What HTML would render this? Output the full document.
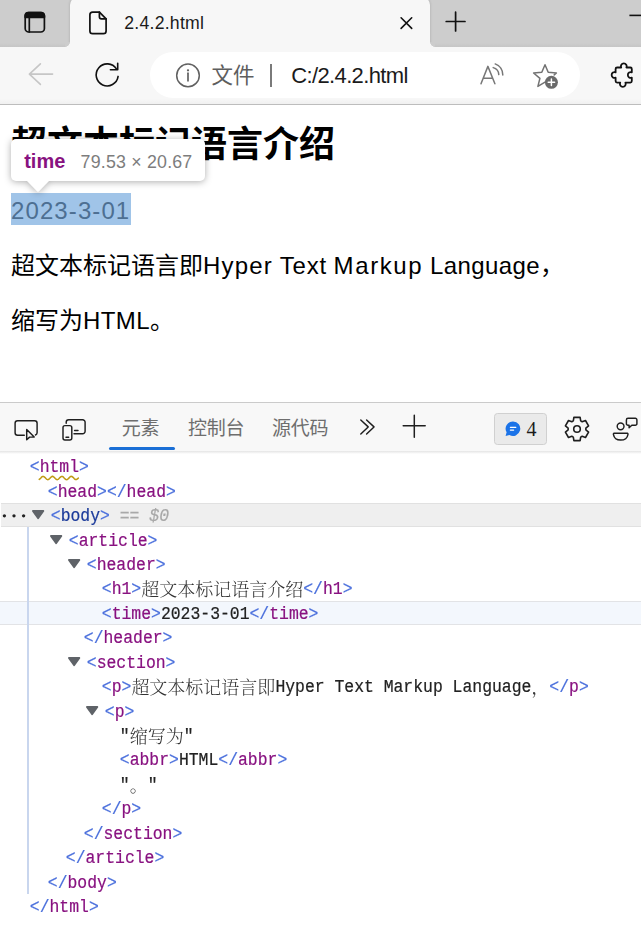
<!DOCTYPE html>
<html lang="zh-CN">
<head>
<meta charset="utf-8">
<title>2.4.2.html</title>
<style>
*{box-sizing:border-box;margin:0;padding:0}
html,body{width:641px;height:933px;overflow:hidden;background:#fff}
body{position:relative;font-family:"Liberation Sans","Noto Sans CJK SC",sans-serif;color:#000}
.abs{position:absolute}
svg{position:absolute;overflow:visible}
/* ---------- browser chrome ---------- */
#tabbar{left:0;top:0;width:641px;height:46.700px;background:linear-gradient(#cdcdcd 43px,#c6c6c6 46.700px)}
#tableft{left:64.700px;top:41.700px;width:5px;height:5px;background:radial-gradient(circle at 0 0,#cdcdcd 4.600px,#f7f7f7 5.100px)}
#tabright{left:430.200px;top:41.700px;width:5px;height:5px;background:radial-gradient(circle at 100% 0,#cdcdcd 4.600px,#f7f7f7 5.100px)}
#tab{left:69.700px;top:-3px;width:360.500px;height:50px;background:#f7f7f7;border-radius:8px 8px 0 0;box-shadow:0 0 3px rgba(0,0,0,.18)}
#toolbar{left:0;top:46.700px;width:641px;height:57.300px;background:linear-gradient(#f7f7f7 52px,#f0f0f0 57px)}
#tbline{left:0;top:103.500px;width:641px;height:1.200px;background:#bdbdbd}
#pill{left:150px;top:52px;width:430px;height:46px;border-radius:23px;background:#fff}
.tabtitle{left:124.300px;top:11.200px;font-size:17.700px;letter-spacing:.22px;line-height:24px;color:#1b1b1b;white-space:nowrap}
.urltxt{font-size:21px;line-height:28px;white-space:nowrap}
/* ---------- page ---------- */
#page{left:0;top:104.700px;width:641px;height:298px;background:#fff}
h1{position:absolute;left:11px;top:120.6px;font-size:36px;line-height:48px;font-weight:bold;white-space:nowrap}
.para{position:absolute;left:11px;font-size:24px;line-height:32px;white-space:nowrap}
#hl{left:11px;top:193px;width:120px;height:31.500px;background:#a0c4e8}
#timetxt{left:11px;top:194.800px;font-size:24px;line-height:32px;color:#4d6f92;white-space:nowrap;letter-spacing:1.1px}
#tip{left:11px;top:138.500px;width:194px;height:42.500px;background:#fff;border-radius:5px}
/* ---------- devtools ---------- */
#dtbar{left:0;top:402px;width:641px;height:49px;background:#f8f8f8;border-top:1px solid #cbcbcb}
#dtshadow{left:0;top:451px;width:641px;height:3px;background:linear-gradient(#e4e4e4,#fff)}
.dttab{font-size:19px;line-height:24px;color:#6e6e6e;white-space:nowrap;top:416.700px;letter-spacing:-.3px}
#tree{left:0;top:454px;width:641px;height:479px;background:#fff}
#selrow{left:1px;top:503px;width:640px;height:24px;background:#efefef;border-top:1px solid #e1e1e1;border-bottom:1px solid #e1e1e1}
#hovrow{left:0;top:601px;width:641px;height:24px;background:#f3f7fd;border-top:1px solid #e2e3e6;border-bottom:1px solid #e2e3e6}
#guide{left:27.300px;top:526.500px;width:1.600px;height:367px;background:#c9d6ee}
.ln{position:absolute;left:0;width:641px;height:24.44px;line-height:24.44px;font-family:"Liberation Mono","Noto Serif CJK SC",monospace;font-size:16.42px;white-space:pre;color:#222;transform:scaleY(1.12);transform-origin:0 0;margin-top:0.2px;-webkit-text-stroke:.2px}
.ln .c{display:inline-block;line-height:0;font-size:18px;font-family:"Liberation Mono","Noto Serif CJK SC",serif;color:#333;transform:scaleY(.893);position:relative;top:1.900px;font-weight:300;-webkit-text-stroke:0}
.t{color:#881280}
.t2{color:#1b3a9a}
.b{color:#4a6fdc}
.eq{color:#a8a8a8;font-style:italic}
.tri{fill:#5f6368;stroke:#5f6368;stroke-width:1.800px;stroke-linejoin:round}
</style>
</head>
<body>
<!-- tab strip -->
<div class="abs" id="tabbar"></div>
<div class="abs" id="tab"></div>
<div class="abs" id="tableft"></div>
<div class="abs" id="tabright"></div>
<div class="abs tabtitle">2.4.2.html</div>
<svg style="left:0;top:0" width="641" height="47" viewBox="0 0 641 47" fill="none" stroke="#111" stroke-width="1.7" stroke-linecap="round" stroke-linejoin="round">
<!-- tab actions -->
<rect x="25.2" y="12.5" width="19.2" height="19.5" rx="3.6"/>
<path d="M25.2 17.3V15.6a3.1 3.1 0 0 1 3.1-3.1h13a3.1 3.1 0 0 1 3.1 3.1v1.7z" fill="#111"/>
<path d="M29.3 17.3V32"/>
<!-- document -->
<path d="M99.4 12.1H92.6a2.7 2.7 0 0 0-2.7 2.7v16.2a2.7 2.7 0 0 0 2.7 2.7h10.8a2.7 2.7 0 0 0 2.7-2.7V18.8z"/>
<path d="M99.4 12.1v4.6a2.1 2.1 0 0 0 2.1 2.1h4.6"/>
<!-- close -->
<path d="M401.100 17.800l10.600 10.600M411.700 17.800l-10.600 10.600" stroke-width="1.600"/>
<!-- new tab -->
<path d="M446.200 21.500h18.800M455.600 12.200v18.800" stroke-width="1.700"/>
<!-- minimize -->
<path d="M629.4 15.4H642" stroke-width="1.6" stroke-linecap="butt"/>
</svg>
<!-- toolbar -->
<div class="abs" id="toolbar"></div>
<div class="abs" id="pill"></div>
<div class="abs urltxt" style="left:211.600px;top:61.800px;color:#5e5e5e;font-size:21.500px">文件</div>
<div class="abs" style="left:270px;top:64px;width:2px;height:23px;background:#7a7a7a"></div>
<div class="abs urltxt" style="left:291.300px;top:61.600px;color:#1b1b1b;font-size:22px;letter-spacing:-0.640px">C:/2.4.2.html</div>
<div class="abs" id="tbline"></div>
<svg style="left:0;top:47px" width="641" height="58" viewBox="0 47 641 58" fill="none" stroke-linecap="round" stroke-linejoin="round">
<!-- back -->
<path d="M52.6 74.1H29.4M40.4 63.8L29.4 74.1l11 10.3" stroke="#c6c6c6" stroke-width="1.6"/>
<!-- refresh -->
<g stroke="#111" stroke-width="1.6"><path d="M118.09 76.43A11 11 0 1 1 116.43 68.91"/><path d="M117.7 63.2V69.8H110.4"/></g>
<!-- info -->
<g stroke="#616161" stroke-width="1.5"><circle cx="188" cy="75.4" r="11.3"/><path d="M188 73.2v7.6" stroke-width="1.7"/></g>
<circle cx="188" cy="70.3" r="1.15" fill="#616161"/>
<!-- read aloud -->
<g stroke="#777" stroke-width="1.5"><path d="M481 83.8l6.9-17.4 7 17.4M483.4 78.3h9.2"/><path d="M493.2 67.6a7.6 7.6 0 0 1 5.6 7"/><path d="M495.2 63.9a11.6 11.6 0 0 1 7.6 11.2"/></g>
<!-- favourite star -->
<path d="M545.0 82.1L537.9 86.4L539.9 78.4L533.6 73.0L541.8 72.3L545.0 64.7L548.2 72.3L556.4 73.0L554.2 74.9" stroke="#727272" stroke-width="1.5"/>
<circle cx="551.4" cy="82.3" r="6.5" fill="#6a6a6a"/>
<path d="M548.2 82.3h6.4M551.4 79.1v6.4" stroke="#fff" stroke-width="1.5"/>
<!-- extensions puzzle -->
<path d="M615.6 69Q615.6 67.5 617.1 67.5L621.2 67.5A2.9 2.9 0 1 1 626.4 67.5L630.3 67.5Q631.8 67.5 631.8 69L631.8 72.3A2.9 2.9 0 1 0 631.8 77.7L631.8 81.1Q631.8 82.6 630.3 82.6L625.4 82.6A2.9 2.9 0 1 1 620.2 82.6L617.1 82.6Q615.6 82.6 615.6 81.1L615.6 77.7A2.9 2.9 0 1 1 615.6 72.3Z" stroke="#111" stroke-width="1.8"/>
</svg>
<!-- page -->
<div class="abs" id="page"></div>
<h1>超文本标记语言介绍</h1>
<div class="abs" id="hl"></div>
<div class="abs" id="timetxt">2023-3-01</div>
<div class="para" style="top:250.200px">超文本标记语言即<span style="letter-spacing:1.2px">Hyper</span> <span style="letter-spacing:.8px">Text</span> <span style="letter-spacing:1.6px">Markup</span> <span style="letter-spacing:.42px">Language</span>，</div>
<div class="para" style="top:305.200px">缩写为<span style="letter-spacing:.4px">HTML</span>。</div>
<div class="abs" id="tipwrap" style="left:0;top:0;width:641px;height:260px;filter:drop-shadow(0 1px 3.5px rgba(0,0,0,.32))">
<div class="abs" id="tip"></div>
<svg style="left:26px;top:180px" width="24" height="13" viewBox="0 0 24 13"><path d="M0 0H24L12.800 11.400Q12 12.200 11.200 11.400Z" fill="#fff"/></svg>
</div>
<div class="abs" style="left:24.200px;top:148.600px;font-size:20px;line-height:24px;font-weight:bold;color:#881280;white-space:nowrap;letter-spacing:0">time</div>
<div class="abs" style="left:80.600px;top:150px;font-size:17.800px;line-height:24px;color:#7d7d7d;white-space:nowrap;letter-spacing:.2px">79.53 × 20.67</div>
<!-- devtools -->
<div class="abs" id="dtbar"></div>
<div class="abs" id="dtshadow"></div>
<div class="abs dttab" style="left:121.800px">元素</div>
<div class="abs" style="left:109px;top:447px;width:66px;height:3px;background:#1a6fd6;border-radius:1.5px"></div>
<div class="abs dttab" style="left:188px">控制台</div>
<div class="abs dttab" style="left:272px">源代码</div>
<svg style="left:0;top:403px" width="641" height="48" viewBox="0 403 641 48" fill="none" stroke="#1f1f1f" stroke-width="1.45" stroke-linecap="round" stroke-linejoin="round">
<!-- inspect -->
<path d="M24.3 435.2H17.6a2.5 2.5 0 0 1-2.5-2.5v-9.4a2.5 2.5 0 0 1 2.5-2.5h17a2.5 2.5 0 0 1 2.5 2.5v9.4a2.5 2.5 0 0 1-1.6 2.3"/>
<path d="M26.7 429.6v10.2l2.9-2.7h4.6z"/>
<!-- device -->
<path d="M66.2 423.3v-1.1a2.5 2.5 0 0 1 2.5-2.5h13.9a2.5 2.5 0 0 1 2.5 2.5v9a2.5 2.5 0 0 1-2.5 2.5H74"/>
<rect x="63" y="425.6" width="8.8" height="14.4" rx="2"/>
<path d="M66 437.3h2.7M74.6 430.4h3.4"/>
<!-- chevrons -->
<path d="M360.8 420l7.4 6.9-7.4 7.1M366.6 420l7.4 6.9-7.4 7.1"/>
<!-- plus -->
<path d="M403.2 425.8h22M414.3 415.2v22" stroke-width="1.5"/>
<!-- gear -->
<path d="M573.31 420.90L573.89 417.41L580.11 417.41L580.69 420.90L582.17 421.75L585.49 420.51L588.59 425.89L585.86 428.15L585.86 429.85L588.59 432.11L585.49 437.49L582.17 436.25L580.69 437.10L580.11 440.59L573.89 440.59L573.31 437.10L571.83 436.25L568.51 437.49L565.41 432.11L568.14 429.85L568.14 428.15L565.41 425.89L568.51 420.51L571.83 421.75Z" stroke-width="1.6" stroke-linejoin="round"/>
<circle cx="577" cy="429" r="3.3" stroke-width="1.6"/>
<!-- feedback -->
<circle cx="620.6" cy="426.3" r="3.4"/>
<path d="M613.8 433.3h13.8a1 1 0 0 1 .4 1c-.6 3.4-3.4 5.8-7.3 5.800s-6.700-2.400-7.300-5.800a1 1 0 0 1 .4-1z"/>
<path d="M628 418.300h7.300a1.600 1.600 0 0 1 1.600 1.600v3.800a1.600 1.600 0 0 1-1.600 1.600h-3.500l-2.700 2.500v-2.500h-1.100a1.600 1.600 0 0 1-1.600-1.600v-3.800a1.600 1.600 0 0 1 1.600-1.600z"/>
</svg>
<div class="abs" style="left:494px;top:413px;width:52.500px;height:31.500px;background:#eaeaea;border:1px solid #d0d0d0;border-radius:3.500px"></div>
<svg style="left:500px;top:418px" width="24" height="22" viewBox="500 418 24 22" fill="none">
<path d="M513.1 421.500a7.200 7.200 0 1 1-3.700 13.400l-3.800 1 1-3.600a7.200 7.200 0 0 1 6.500-10.800z" fill="#1b73e8"/>
<path d="M510.400 427.300h5.400M510.400 430.100h3.200" stroke="#fff" stroke-width="1.300" stroke-linecap="round"/>
</svg>
<div class="abs" style="left:526.500px;top:417px;font-family:'Liberation Serif',serif;font-size:20px;line-height:24px;color:#1b1b1b">4</div>
<div class="abs" id="tree"></div>
<div class="abs" id="selrow"></div>
<div class="abs" id="hovrow"></div>
<div class="abs" id="guide"></div>
<svg style="left:0;top:470px" width="100" height="14" viewBox="0 470 100 14" fill="none"><path d="M39.2 479.42L39.9 478.89L40.6 478.17L41.3 477.41L42.0 476.78L42.7 476.41L43.4 476.38L44.1 476.71L44.8 477.31L45.5 478.06L46.2 478.79L46.9 479.36L47.6 479.64L48.3 479.56L49.0 479.15L49.7 478.49L50.4 477.73L51.1 477.02L51.8 476.53L52.5 476.35L53.2 476.53L53.9 477.02L54.6 477.73L55.3 478.49L56.0 479.15L56.7 479.56L57.4 479.64L58.1 479.36L58.8 478.79L59.5 478.06L60.2 477.31L60.9 476.71L61.6 476.38L62.3 476.41L63.0 476.78L63.7 477.41L64.4 478.17L65.1 478.89L65.8 479.42L66.5 479.65L67.2 479.52L67.9 479.07L68.6 478.38L69.3 477.62L70.0 476.93L70.7 476.48L71.4 476.35L72.1 476.58L72.8 477.11L73.5 477.83L74.2 478.59L74.9 479.22L75.6 479.59L76.3 479.62L77.0 479.29L77.7 478.69L78.4 477.94" stroke="#bf9a12" stroke-width="1.500" stroke-linecap="round" stroke-linejoin="round"/></svg>
<svg style="left:0;top:508px" width="30" height="14" viewBox="0 508 30 14"><circle cx="4.400" cy="515.800" r="1.650" fill="#222"/><circle cx="14" cy="515.800" r="1.650" fill="#222"/><circle cx="23.600" cy="515.800" r="1.650" fill="#222"/></svg>
<div class="ln" style="top:454.00px;padding-left:29.8px"><span class="b">&lt;</span><span class="t">html</span><span class="b">&gt;</span></div>
<div class="ln" style="top:478.44px;padding-left:47.8px"><span class="b">&lt;</span><span class="t">head</span><span class="b">&gt;</span><span class="b">&lt;/</span><span class="t">head</span><span class="b">&gt;</span></div>
<svg class="tri" style="left:32.1px;top:510.38px" width="13" height="10" viewBox="0 0 13 10"><path d="M0.900 0.900H11.350L6.125 8.200Z"/></svg>
<div class="ln" style="top:502.88px;padding-left:50.8px"><span class="b">&lt;</span><span class="t2">body</span><span class="b">&gt;</span><span class="eq"> == $0</span></div>
<svg class="tri" style="left:50.1px;top:534.82px" width="13" height="10" viewBox="0 0 13 10"><path d="M0.900 0.900H11.350L6.125 8.200Z"/></svg>
<div class="ln" style="top:527.32px;padding-left:68.8px"><span class="b">&lt;</span><span class="t">article</span><span class="b">&gt;</span></div>
<svg class="tri" style="left:68.1px;top:559.26px" width="13" height="10" viewBox="0 0 13 10"><path d="M0.900 0.900H11.350L6.125 8.200Z"/></svg>
<div class="ln" style="top:551.76px;padding-left:86.8px"><span class="b">&lt;</span><span class="t">header</span><span class="b">&gt;</span></div>
<div class="ln" style="top:576.20px;padding-left:101.8px"><span class="b">&lt;</span><span class="t">h1</span><span class="b">&gt;</span><span class="c">超文本标记语言介绍</span><span class="b">&lt;/</span><span class="t">h1</span><span class="b">&gt;</span></div>
<div class="ln" style="top:600.64px;padding-left:101.8px"><span class="b">&lt;</span><span class="t">time</span><span class="b">&gt;</span>2023-3-01<span class="b">&lt;/</span><span class="t">time</span><span class="b">&gt;</span></div>
<div class="ln" style="top:625.08px;padding-left:83.8px"><span class="b">&lt;/</span><span class="t">header</span><span class="b">&gt;</span></div>
<svg class="tri" style="left:68.1px;top:657.02px" width="13" height="10" viewBox="0 0 13 10"><path d="M0.900 0.900H11.350L6.125 8.200Z"/></svg>
<div class="ln" style="top:649.52px;padding-left:86.8px"><span class="b">&lt;</span><span class="t">section</span><span class="b">&gt;</span></div>
<div class="ln" style="top:673.96px;padding-left:101.8px"><span class="b">&lt;</span><span class="t">p</span><span class="b">&gt;</span><span class="c">超文本标记语言即</span>Hyper Text Markup Language<span class="c">，</span><span class="b">&lt;/</span><span class="t">p</span><span class="b">&gt;</span></div>
<svg class="tri" style="left:86.1px;top:705.90px" width="13" height="10" viewBox="0 0 13 10"><path d="M0.900 0.900H11.350L6.125 8.200Z"/></svg>
<div class="ln" style="top:698.40px;padding-left:104.8px"><span class="b">&lt;</span><span class="t">p</span><span class="b">&gt;</span></div>
<div class="ln" style="top:722.84px;padding-left:119.8px">"<span class="c">缩写为</span>"</div>
<div class="ln" style="top:747.28px;padding-left:119.8px"><span class="b">&lt;</span><span class="t">abbr</span><span class="b">&gt;</span>HTML<span class="b">&lt;/</span><span class="t">abbr</span><span class="b">&gt;</span></div>
<div class="ln" style="top:771.72px;padding-left:119.8px">"<span class="c">。</span>"</div>
<div class="ln" style="top:796.16px;padding-left:101.8px"><span class="b">&lt;/</span><span class="t">p</span><span class="b">&gt;</span></div>
<div class="ln" style="top:820.60px;padding-left:83.8px"><span class="b">&lt;/</span><span class="t">section</span><span class="b">&gt;</span></div>
<div class="ln" style="top:845.04px;padding-left:65.8px"><span class="b">&lt;/</span><span class="t">article</span><span class="b">&gt;</span></div>
<div class="ln" style="top:869.48px;padding-left:47.8px"><span class="b">&lt;/</span><span class="t">body</span><span class="b">&gt;</span></div>
<div class="ln" style="top:893.92px;padding-left:29.8px"><span class="b">&lt;/</span><span class="t">html</span><span class="b">&gt;</span></div>
</body>
</html>
